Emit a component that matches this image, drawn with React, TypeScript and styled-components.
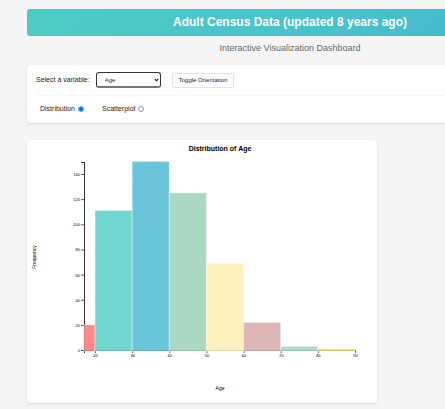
import React, { useState } from "react";
import styled, { createGlobalStyle } from "styled-components";

const GlobalStyle = createGlobalStyle`
  * { box-sizing: border-box; }
  html { overflow: hidden; }
  body {
    margin: 0;
    background: #f5f5f5;
    color: #222;
    font-family: "Liberation Sans", Arial, sans-serif;
  }
`;

const Page = styled.main`
  display: flex;
  flex-direction: column;
  min-width: 580px;
  padding: 9px 27px 6px;
`;

const Banner = styled.h1`
  margin: 0;
  border-radius: 3px;
  background: linear-gradient(135deg, #4ecdc4, #45b7d1);
  color: #fff;
  font-size: 12px;
  line-height: 27px;
  text-align: center;
`;

const Subtitle = styled.p`
  margin: 6px 0 11px;
  color: #666;
  font-size: 9px;
  line-height: 12px;
  text-align: center;
`;

const Card = styled.section`
  border-radius: 4px;
  background: #fff;
  box-shadow: 0 1px 3px rgba(0, 0, 0, 0.12);
`;

const Controls = styled(Card)`
  padding: 0 9px 2px;
`;

const ControlRow = styled.div<{ $divided?: boolean }>`
  display: flex;
  align-items: center;
  height: ${(p) => (p.$divided ? 31 : 25)}px;
  border-bottom: ${(p) => (p.$divided ? "1px solid #f6f6f6" : "none")};
  padding-left: ${(p) => (p.$divided ? 0 : 4)}px;
`;

const Label = styled.label`
  font-size: 7px;
  line-height: 10px;
`;

const SelectBox = styled.div`
  display: grid;
  align-items: center;
  width: 65px;
  margin: 0 11px 0 6px;

  > * {
    grid-area: 1 / 1;
  }
`;

const Select = styled.select`
  appearance: none;
  width: 100%;
  height: 16px;
  padding: 0 8px;
  border: 1px solid #333;
  border-bottom: 2px solid #777;
  border-radius: 3px;
  background: #fff;
  color: #333;
  font: 6px "Liberation Sans", Arial, sans-serif;
  outline: none;
`;

const Chevron = styled.svg`
  justify-self: end;
  margin-right: 2px;
  pointer-events: none;
`;

const Button = styled.button`
  height: 15px;
  padding: 0 6px;
  border: 1px solid #e4e4e4;
  border-radius: 2px;
  background: #fff;
  color: #222;
  font: 6px "Liberation Sans", Arial, sans-serif;
`;

const Option = styled(Label)`
  display: flex;
  align-items: center;
  gap: 3px;
  margin-right: 18px;
`;

const Radio = styled.input`
  appearance: none;
  width: 6px;
  height: 6px;
  margin: 1px 0 0;
  border: 1px solid #999;
  border-radius: 50%;
  background: #fff;

  &:checked {
    border-color: #5fa8f8;
    background: #0a74f0;
  }
`;

const ChartCard = styled(Card)`
  width: 350px;
  margin-top: 17px;
`;

const Chart = styled.svg`
  display: block;
  width: 100%;
  height: auto;
  font-family: "Liberation Sans", Arial, sans-serif;
`;

const BASE = 210;
const TOP = 22;
const LEFT = 57;
const RIGHT = 328;
const xAt = (age: number) => RIGHT - ((90 - age) * 260) / 70;
const yAt = (count: number) => BASE - (count * 176) / 140;

const BINS = [
  { from: 17, to: 20, count: 20, color: "#ff6b6b" },
  { from: 20, to: 30, count: 111, color: "#4ecdc4" },
  { from: 30, to: 40, count: 150, color: "#45b7d1" },
  { from: 40, to: 50, count: 125, color: "#96ceb4" },
  { from: 50, to: 60, count: 69, color: "#ffeead" },
  { from: 60, to: 70, count: 22, color: "#d4a5a5" },
  { from: 70, to: 80, count: 3, color: "#9ad1c0" },
  { from: 80, to: 90, count: 1, color: "#e9d758" },
];

function Histogram() {
  return (
    <Chart viewBox="0 0 350 263" role="img" aria-label="Distribution of Age">
      <text x="193" y="11" textAnchor="middle" fontSize="7" fontWeight="bold">
        Distribution of Age
      </text>
      <g stroke="#333" strokeWidth="1" fill="none" shapeRendering="crispEdges">
        <path d={`M${LEFT - 3} ${TOP + 0.5}H${LEFT + 0.5}V${BASE + 0.5}`} />
        <path d={`M${LEFT + 0.5} ${BASE + 3}V${BASE + 0.5}H${RIGHT + 0.5}v2.5`} />
      </g>
      {[0, 20, 40, 60, 80, 100, 120, 140].map((n) => (
        <g key={n}>
          <path d={`M${LEFT - 3} ${yAt(n) + 0.5}h3`} stroke="#555" />
          <text x={LEFT - 4} y={yAt(n) + 2} textAnchor="end" fontSize="4">
            {n}
          </text>
        </g>
      ))}
      {[20, 30, 40, 50, 60, 70, 80, 90].map((n) => (
        <g key={n}>
          <path d={`M${xAt(n) + 0.5} ${BASE}v3`} stroke="#555" />
          <text x={xAt(n) + 0.5} y={BASE + 7} textAnchor="middle" fontSize="4">
            {n}
          </text>
        </g>
      ))}
      {BINS.map((b) => (
        <rect
          key={b.from}
          x={Math.max(LEFT, xAt(b.from))}
          y={yAt(b.count)}
          width={xAt(b.to) - Math.max(LEFT, xAt(b.from))}
          height={BASE + 1 - yAt(b.count)}
          fill={b.color}
          fillOpacity="0.8"
          stroke="#fff"
          strokeOpacity="0.4"
          strokeWidth="1"
        />
      ))}
      <text x="193" y="250" textAnchor="middle" fontSize="5">
        Age
      </text>
      <text transform="translate(9 117) rotate(-90)" textAnchor="middle" fontSize="5">
        Frequency
      </text>
    </Chart>
  );
}

export default function App() {
  const [view, setView] = useState("distribution");
  return (
    <>
      <GlobalStyle />
      <Page>
        <Banner>Adult Census Data (updated 8 years ago)</Banner>
        <Subtitle>Interactive Visualization Dashboard</Subtitle>
        <Controls>
          <ControlRow $divided>
            <Label htmlFor="variable">Select a variable:</Label>
            <SelectBox>
              <Select id="variable" defaultValue="Age">
                <option>Age</option>
              </Select>
              <Chevron width="5" height="4" viewBox="0 0 5 4" aria-hidden="true">
                <path d="M.8 1 2.5 2.8 4.2 1" fill="none" stroke="#222" strokeWidth="1.1" />
              </Chevron>
            </SelectBox>
            <Button type="button">Toggle Orientation</Button>
          </ControlRow>
          <ControlRow>
            <Option>
              Distribution
              <Radio
                type="radio"
                name="view"
                checked={view === "distribution"}
                onChange={() => setView("distribution")}
              />
            </Option>
            <Option>
              Scatterplot
              <Radio
                type="radio"
                name="view"
                checked={view === "scatterplot"}
                onChange={() => setView("scatterplot")}
              />
            </Option>
          </ControlRow>
        </Controls>
        <ChartCard>
          <Histogram />
        </ChartCard>
      </Page>
    </>
  );
}
